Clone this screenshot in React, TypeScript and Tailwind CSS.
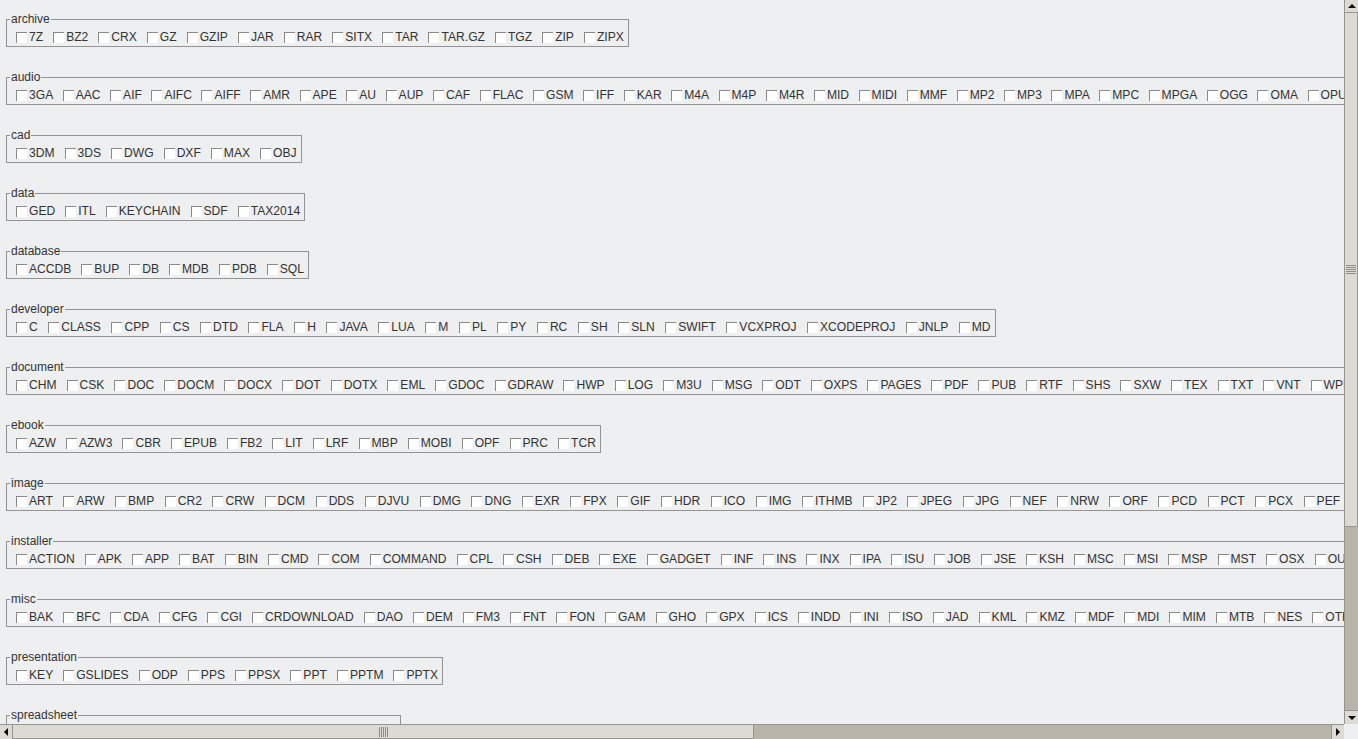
import React from 'react';

// gap per group: Swing's glyph advances differ a little from the browser's, so a few rows get nudged
const GROUPS: [string, string[], string?][] = [
  ['archive', ['7Z', 'BZ2', 'CRX', 'GZ', 'GZIP', 'JAR', 'RAR', 'SITX', 'TAR', 'TAR.GZ', 'TGZ', 'ZIP', 'ZIPX']],
  ['audio', ['3GA', 'AAC', 'AIF', 'AIFC', 'AIFF', 'AMR', 'APE', 'AU', 'AUP', 'CAF', 'FLAC', 'GSM', 'IFF', 'KAR', 'M4A', 'M4P', 'M4R', 'MID', 'MIDI', 'MMF', 'MP2', 'MP3', 'MPA', 'MPC', 'MPGA', 'OGG', 'OMA', 'OPUS', 'RA', 'RAM', 'WAV', 'WMA'], 'gap-[9.5px]'],
  ['cad', ['3DM', '3DS', 'DWG', 'DXF', 'MAX', 'OBJ']],
  ['data', ['GED', 'ITL', 'KEYCHAIN', 'SDF', 'TAX2014']],
  ['database', ['ACCDB', 'BUP', 'DB', 'MDB', 'PDB', 'SQL']],
  ['developer', ['C', 'CLASS', 'CPP', 'CS', 'DTD', 'FLA', 'H', 'JAVA', 'LUA', 'M', 'PL', 'PY', 'RC', 'SH', 'SLN', 'SWIFT', 'VCXPROJ', 'XCODEPROJ', 'JNLP', 'MD'], 'gap-[10.5px]'],
  ['document', ['CHM', 'CSK', 'DOC', 'DOCM', 'DOCX', 'DOT', 'DOTX', 'EML', 'GDOC', 'GDRAW', 'HWP', 'LOG', 'M3U', 'MSG', 'ODT', 'OXPS', 'PAGES', 'PDF', 'PUB', 'RTF', 'SHS', 'SXW', 'TEX', 'TXT', 'VNT', 'WPD', 'WPS', 'XPS']],
  ['ebook', ['AZW', 'AZW3', 'CBR', 'EPUB', 'FB2', 'LIT', 'LRF', 'MBP', 'MOBI', 'OPF', 'PRC', 'TCR']],
  ['image', ['ART', 'ARW', 'BMP', 'CR2', 'CRW', 'DCM', 'DDS', 'DJVU', 'DMG', 'DNG', 'EXR', 'FPX', 'GIF', 'HDR', 'ICO', 'IMG', 'ITHMB', 'JP2', 'JPEG', 'JPG', 'NEF', 'NRW', 'ORF', 'PCD', 'PCT', 'PCX', 'PEF', 'PNG', 'PSD', 'RAF'], 'gap-[10.5px]'],
  ['installer', ['ACTION', 'APK', 'APP', 'BAT', 'BIN', 'CMD', 'COM', 'COMMAND', 'CPL', 'CSH', 'DEB', 'EXE', 'GADGET', 'INF', 'INS', 'INX', 'IPA', 'ISU', 'JOB', 'JSE', 'KSH', 'MSC', 'MSI', 'MSP', 'MST', 'OSX', 'OUT', 'PIF', 'RUN']],
  ['misc', ['BAK', 'BFC', 'CDA', 'CFG', 'CGI', 'CRDOWNLOAD', 'DAO', 'DEM', 'FM3', 'FNT', 'FON', 'GAM', 'GHO', 'GPX', 'ICS', 'INDD', 'INI', 'ISO', 'JAD', 'KML', 'KMZ', 'MDF', 'MDI', 'MIM', 'MTB', 'NES', 'OTF', 'PKG']],
  ['presentation', ['KEY', 'GSLIDES', 'ODP', 'PPS', 'PPSX', 'PPT', 'PPTM', 'PPTX']],
  ['spreadsheet', ['CSV', 'ODS', 'NUMBERS', 'XLSB', 'XLS', 'XLSM', 'XLSX']],
];

function CheckBox({ label }: { label: string }) {
  return (
    <div className="flex h-[14px] items-center">
      <span className="mr-[2px] h-[11px] w-[11px] shrink-0 border-t border-l border-[#8a8a8a] bg-white" />
      <span className="text-[12.1px]">{label}</span>
    </div>
  );
}

function Group({ title, items, gap = 'gap-[10px]' }: { title: string; items: string[]; gap?: string }) {
  return (
    <fieldset className="mb-[23px] ml-[6px] w-max border border-[#939393] pr-[4px] pb-[2px] pl-[3px]">
      <legend className="px-[1px] leading-[14px]">{title}</legend>
      <div className={`ml-[6px] flex pt-[4px] whitespace-nowrap ${gap}`}>
        {items.map(i => <CheckBox key={i} label={i} />)}
      </div>
    </fieldset>
  );
}

const Tri = ({ dir }: { dir: 'up' | 'down' | 'left' | 'right' }) => {
  const pts = {
    up: '0,5 4,1 8,5',
    down: '0,1 8,1 4,5',
    left: '5,0 5,8 1,4',
    right: '1,0 1,8 5,4',
  }[dir];
  const vertical = dir === 'up' || dir === 'down';
  return (
    <svg width={vertical ? 8 : 6} height={vertical ? 6 : 8} viewBox={vertical ? '0 0 8 6' : '0 0 6 8'}>
      <polygon points={pts} fill="#000" />
    </svg>
  );
};

function VScroll() {
  return (
    <div className="flex w-[14px] flex-col border-l border-[#98958f] bg-[#b8b4aa]">
      <div className="flex h-[13px] items-center justify-center border-b border-[#98958f] bg-[#dcdad5]">
        <Tri dir="up" />
      </div>
      <div className="flex h-[514px] flex-col items-center justify-center gap-[1px] border-r border-b border-[#98958f] bg-[#dcdad5]">
        {[0, 1, 2, 3, 4].map(i => <span key={i} className="h-[1px] w-[10px] bg-[#8f8c86]" />)}
      </div>
      <div className="flex-1" />
      <div className="flex h-[14px] items-center justify-center border-t border-[#98958f] bg-[#dcdad5]">
        <Tri dir="down" />
      </div>
    </div>
  );
}

function HScroll() {
  return (
    <div className="flex flex-1 border-t border-[#98958f] bg-[#b8b4aa]">
      <div className="flex w-[13px] items-center justify-center border-r border-[#98958f] bg-[#dcdad5]">
        <Tri dir="left" />
      </div>
      <div className="flex w-[741px] items-center justify-center gap-[1px] border-r border-b border-[#98958f] bg-[#dcdad5]">
        {[0, 1, 2, 3, 4].map(i => <span key={i} className="h-[10px] w-[1px] bg-[#8f8c86]" />)}
      </div>
      <div className="flex-1" />
      <div className="flex w-[13px] items-center justify-center border-l border-[#98958f] bg-[#dcdad5]">
        <Tri dir="right" />
      </div>
    </div>
  );
}

export default function App() {
  return (
    <div className="flex h-[739px] w-[1358px] flex-col overflow-hidden bg-[#eeeff1] font-['Liberation_Sans',Arial,sans-serif] text-[12px] text-[#333]">
      <div className="flex min-h-0 flex-1">
        <div className="min-w-0 flex-1 overflow-hidden pt-[12px]">
          {GROUPS.map(([t, items, gap]) => <Group key={t} title={t} items={items} gap={gap} />)}
        </div>
        <VScroll />
      </div>
      <div className="flex h-[15px]">
        <HScroll />
        <div className="w-[14px]" />
      </div>
    </div>
  );
}
